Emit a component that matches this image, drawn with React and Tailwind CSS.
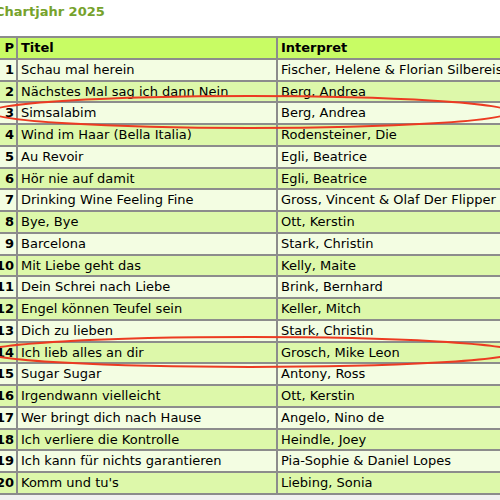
const rows = [
  ["Schau mal herein", "Fischer, Helene & Florian Silbereisen"],
  ["Nächstes Mal sag ich dann Nein", "Berg, Andrea"],
  ["Simsalabim", "Berg, Andrea"],
  ["Wind im Haar (Bella Italia)", "Rodensteiner, Die"],
  ["Au Revoir", "Egli, Beatrice"],
  ["Hör nie auf damit", "Egli, Beatrice"],
  ["Drinking Wine Feeling Fine", "Gross, Vincent & Olaf Der Flipper"],
  ["Bye, Bye", "Ott, Kerstin"],
  ["Barcelona", "Stark, Christin"],
  ["Mit Liebe geht das", "Kelly, Maite"],
  ["Dein Schrei nach Liebe", "Brink, Bernhard"],
  ["Engel können Teufel sein", "Keller, Mitch"],
  ["Dich zu lieben", "Stark, Christin"],
  ["Ich lieb alles an dir", "Grosch, Mike Leon"],
  ["Sugar Sugar", "Antony, Ross"],
  ["Irgendwann vielleicht", "Ott, Kerstin"],
  ["Wer bringt dich nach Hause", "Angelo, Nino de"],
  ["Ich verliere die Kontrolle", "Heindle, Joey"],
  ["Ich kann für nichts garantieren", "Pia-Sophie & Daniel Lopes"],
  ["Komm und tu's", "Liebing, Sonia"],
];

function Row({ p, title, artist, bg, bold }) {
  return (
    <div className={`flex h-[21.75px] border-b-2 border-[#8c8c8c] ${bg}`}>
      <div className="w-[32px] shrink-0 border-r-2 border-[#8c8c8c] pr-[2px] text-right font-bold leading-[20px]">
        {p}
      </div>
      <div className={`w-[260px] shrink-0 border-r-2 border-[#8c8c8c] pl-[3px] leading-[20px] whitespace-nowrap ${bold ? "font-bold" : ""}`}>
        {title}
      </div>
      <div className={`w-[320px] shrink-0 pl-[3px] leading-[20px] whitespace-nowrap ${bold ? "font-bold" : ""}`}>
        {artist}
      </div>
    </div>
  );
}

export default function App() {
  return (
    <div className="relative w-[500px] h-[500px] overflow-hidden bg-white text-[13px] text-black font-['DejaVu_Sans',sans-serif]">
      <div className="h-[36px] -ml-[5px] pt-[2px] text-[13px] font-bold text-[#76a22c] leading-[20px]">
        Chartjahr 2025
      </div>
      <div className="-ml-[14px] w-[640px] border-t-2 border-[#8c8c8c] bg-[#f1f1f1] pb-[8px]">
        <Row p="P" title="Titel" artist="Interpret" bg="bg-[#c8fc64]" bold />
        {rows.map(([t, a], i) => (
          <Row
            key={i}
            p={i + 1}
            title={t}
            artist={a}
            bg={i % 2 === 0 ? "bg-[#f3fde2]" : "bg-[#ddf8aa]"}
          />
        ))}
      </div>
      <svg className="pointer-events-none absolute left-0 top-0" width="500" height="500">
        <ellipse cx="250" cy="112" rx="260" ry="16" fill="none" stroke="#ec3b22" strokeWidth="2" />
        <ellipse cx="250" cy="352" rx="265" ry="15" fill="none" stroke="#ec3b22" strokeWidth="2" />
      </svg>
    </div>
  );
}
